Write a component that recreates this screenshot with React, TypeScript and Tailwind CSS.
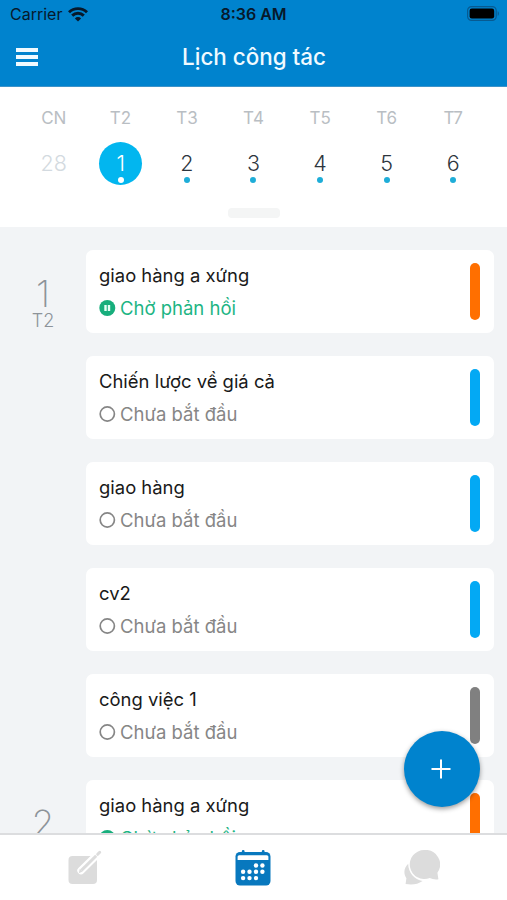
import clsx from "clsx";

type TaskStatus = "waiting" | "pending";

interface Task {
  title: string;
  status: TaskStatus;
  barClass: string;
}

interface DayGroup {
  day: number;
  label: string;
  tasks: Task[];
}

const weekDays = [
  { label: "CN", date: 28, outside: true },
  { label: "T2", date: 1, selected: true },
  { label: "T3", date: 2 },
  { label: "T4", date: 3 },
  { label: "T5", date: 4 },
  { label: "T6", date: 5 },
  { label: "T7", date: 6 },
];

const groups: DayGroup[] = [
  {
    day: 1,
    label: "T2",
    tasks: [
      { title: "giao hàng a xứng", status: "waiting", barClass: "bg-[#ff6f00]" },
      { title: "Chiến lược về giá cả", status: "pending", barClass: "bg-[#03a9f4]" },
      { title: "giao hàng", status: "pending", barClass: "bg-[#03a9f4]" },
      { title: "cv2", status: "pending", barClass: "bg-[#03a9f4]" },
      { title: "công việc 1", status: "pending", barClass: "bg-[#808080]" },
    ],
  },
  {
    day: 2,
    label: "T3",
    tasks: [
      { title: "giao hàng a xứng", status: "waiting", barClass: "bg-[#ff6f00]" },
    ],
  },
];

const calendarDots = [
  [21, 15.5], [27.4, 15.5],
  [8.1, 21.8], [14.5, 21.8], [21, 21.8], [27.4, 21.8],
  [8.1, 28.1], [14.5, 28.1], [21, 28.1],
];

const StatusBar = () => (
  <div className="grid h-7 grid-cols-3 items-center text-[#07192b]">
    <div className="flex items-center gap-[6px] pl-[10px]">
      <span className="text-[16px] leading-7">Carrier</span>
      <svg width="20" height="15" viewBox="0 0 20 15" fill="none" stroke="currentColor" strokeWidth="2.9">
        <path d="M1 5.2a13 13 0 0 1 18 0" />
        <path d="M4.2 8.6a8.4 8.4 0 0 1 11.6 0" />
        <path d="M10 14.6 6.9 11.4a4.4 4.4 0 0 1 6.2 0z" fill="currentColor" stroke="none" />
      </svg>
    </div>
    <span className="text-center text-[16px] leading-7 font-semibold">8:36 AM</span>
    <div className="flex justify-end pr-[7px]">
      <svg width="33" height="15" viewBox="0 0 33 15" className="-mt-[2px]">
        <rect x="0.6" y="0.6" width="28.6" height="13.8" rx="4" fill="none" stroke="#075a91" strokeWidth="1.2" />
        <rect x="2.6" y="2.6" width="24.6" height="9.8" rx="2.2" fill="#000" />
        <path d="M30.7 5.2c1.6.6 1.6 4 0 4.6z" fill="#075a91" />
      </svg>
    </div>
  </div>
);

const Header = () => (
  <header className="h-[87px] shrink-0 border-b border-[#3d93c9] bg-[#0083ce]">
    <StatusBar />
    <div className="grid h-[58px] grid-cols-3 items-center">
      <button type="button" aria-label="Menu" className="ml-4 flex w-[22px] flex-col gap-[3px]">
        <span className="h-1 bg-[#f0faff]" />
        <span className="h-1 bg-[#f0faff]" />
        <span className="h-1 bg-[#f0faff]" />
      </button>
      <h1 className="pl-px text-center text-[22.4px] font-medium whitespace-nowrap text-[#f0faff]">
        Lịch công tác
      </h1>
    </div>
  </header>
);

const WeekStrip = () => (
  <section className="flex h-[140px] shrink-0 flex-col items-center bg-white">
    <div className="grid w-[466px] grid-cols-7 pt-[21px]">
      {weekDays.map(({ label, date, outside, selected }) => (
        <div key={label} className="flex flex-col items-center">
          <span className="text-[17px] leading-5 text-[#b9bec3]">{label}</span>
          <div
            className={clsx(
              "mt-[14px] flex size-[43px] flex-col items-center rounded-full pt-[8px]",
              selected && "ml-px bg-[#02b6ef]",
            )}
          >
            <span
              className={clsx(
                "text-[21.5px] leading-[26px] font-light",
                outside && "text-[#d3dae0]",
                selected && "text-white",
                !outside && !selected && "text-[#2d353d]",
              )}
            >
              {date}
            </span>
            {!outside && (
              <span
                className={clsx(
                  "mt-[1px] size-[6px] rounded-full",
                  selected ? "bg-white" : "bg-[#1eadd8]",
                )}
              />
            )}
          </div>
        </div>
      ))}
    </div>
    <div className="mt-[23px] h-[10px] w-[52px] rounded-[4px] bg-[#f4f5f5]" />
  </section>
);

const StatusLine = ({ status }: { status: TaskStatus }) => {
  const waiting = status === "waiting";

  return (
    <div
      className={clsx(
        "flex items-center gap-[4px] text-[18.5px] leading-6",
        waiting ? "text-[#1db584]" : "text-[#868686]",
      )}
    >
      <svg width="17" height="17" viewBox="0 0 17 17">
        {waiting ? (
          <>
            <circle cx="8.3" cy="8" r="8" fill="#17ae7c" />
            <path d="M5.3 5h2.4v6H5.3zM8.8 5h2.4v6H8.8z" fill="#e6fff6" />
          </>
        ) : (
          <circle cx="8.3" cy="8" r="7.1" fill="none" stroke="currentColor" strokeWidth="1.7" />
        )}
      </svg>
      <span>{waiting ? "Chờ phản hồi" : "Chưa bắt đầu"}</span>
    </div>
  );
};

const TaskCard = ({ task }: { task: Task }) => (
  <article className="flex h-[83px] items-center justify-between rounded-[7px] bg-white pr-[14px] pl-[13px]">
    <div className="flex flex-col gap-[9px]">
      <h2 className="text-[18.45px] leading-6 text-[#191919]">{task.title}</h2>
      <StatusLine status={task.status} />
    </div>
    <div className={clsx("h-[57px] w-[10px] rounded-full", task.barClass)} />
  </article>
);

const PencilIcon = () => (
  <svg width="34" height="34" viewBox="0 0 34 34">
    <rect x="0.5" y="6" width="28.5" height="28" rx="4" fill="#dcdcdc" />
    <path d="m13 20.6 18-17.8" stroke="#fff" strokeWidth="7.4" strokeLinecap="round" />
    <path d="m10.8 23.2 1-4.4 2.8 2.6z" fill="#dcdcdc" />
    <path d="M13.4 20.4 28.2 5.7" stroke="#dcdcdc" strokeWidth="3" />
    <path d="m29.7 4.3 2-2" stroke="#dcdcdc" strokeWidth="3" strokeLinecap="round" />
  </svg>
);

const CalendarIcon = () => (
  <svg width="36" height="36" viewBox="0 0 36 36" className="-ml-px">
    <rect x="0.5" y="2" width="35" height="33.6" rx="4.5" fill="#0878be" />
    <path d="M8.2 1.4v3M28.2 1.4v3" stroke="#0878be" strokeWidth="2.8" strokeLinecap="round" />
    <path d="M2.6 6.8Q2.6 5.2 4.2 5.2H31.8Q33.4 5.2 33.4 6.8V10H2.6z" fill="#fff" />
    {calendarDots.map(([cx, cy]) => (
      <circle key={`${cx}-${cy}`} cx={cx} cy={cy} r="2.2" fill="#fff" />
    ))}
  </svg>
);

const ChatIcon = () => (
  <svg width="36" height="36" viewBox="0 0 36 36" fill="#dcdcdc" className="-ml-px">
    <path d="M4.2 13.8C-.4 18-.6 24.2 2.4 28.2L1.6 34c6 1 12 .6 17-3C10.4 29.6 4.2 23 4.2 13.8z" />
    <path d="M20.2 0a14.5 14.5 0 1 0 5.6 27.9c2.4 1.2 5.4 1.8 8.6 1.3l-1-6.4A14.5 14.5 0 0 0 20.2 0z" />
  </svg>
);

const TabBar = () => (
  <nav className="grid h-[67px] shrink-0 grid-cols-3 border-t-2 border-[#dcdddf] bg-white">
    <button type="button" aria-label="Công việc" className="flex justify-center pt-[15px]">
      <PencilIcon />
    </button>
    <button type="button" aria-label="Lịch" className="flex justify-center pt-[15px]">
      <CalendarIcon />
    </button>
    <button type="button" aria-label="Tin nhắn" className="flex justify-center pt-[15px]">
      <ChatIcon />
    </button>
  </nav>
);

export default function App() {
  return (
    <div className="relative flex h-[900px] w-[507px] flex-col overflow-hidden bg-[#f2f4f6] font-['Inter','Liberation_Sans',sans-serif]">
      <Header />
      <WeekStrip />

      <main className="flex min-h-0 flex-1 flex-col gap-[23px] overflow-hidden pt-[23px]">
        {groups.map((group) => (
          <section key={group.day} className="flex shrink-0 pr-[13px]">
            <div className="flex w-[86px] flex-col items-center pt-[25px] text-[#8d9399]">
              <span className="text-[37px] leading-[38px] font-extralight">{group.day}</span>
              <span className="-mt-px text-[18px] leading-[18px] font-light">{group.label}</span>
            </div>
            <div className="flex flex-1 flex-col gap-[23px]">
              {group.tasks.map((task) => (
                <TaskCard key={task.title} task={task} />
              ))}
            </div>
          </section>
        ))}
      </main>

      <TabBar />

      <button
        type="button"
        aria-label="Thêm"
        className="absolute right-[27px] bottom-[93px] flex size-[76px] items-center justify-center rounded-full bg-[#0083ce] shadow-[0_2px_5px_rgba(0,0,0,0.4)]"
      >
        <svg width="20" height="20" viewBox="0 0 20 20" stroke="#fff" strokeWidth="2" className="-mt-[1px] -ml-[3px]">
          <path d="M10 .5v19M.5 10h19" />
        </svg>
      </button>
    </div>
  );
}
